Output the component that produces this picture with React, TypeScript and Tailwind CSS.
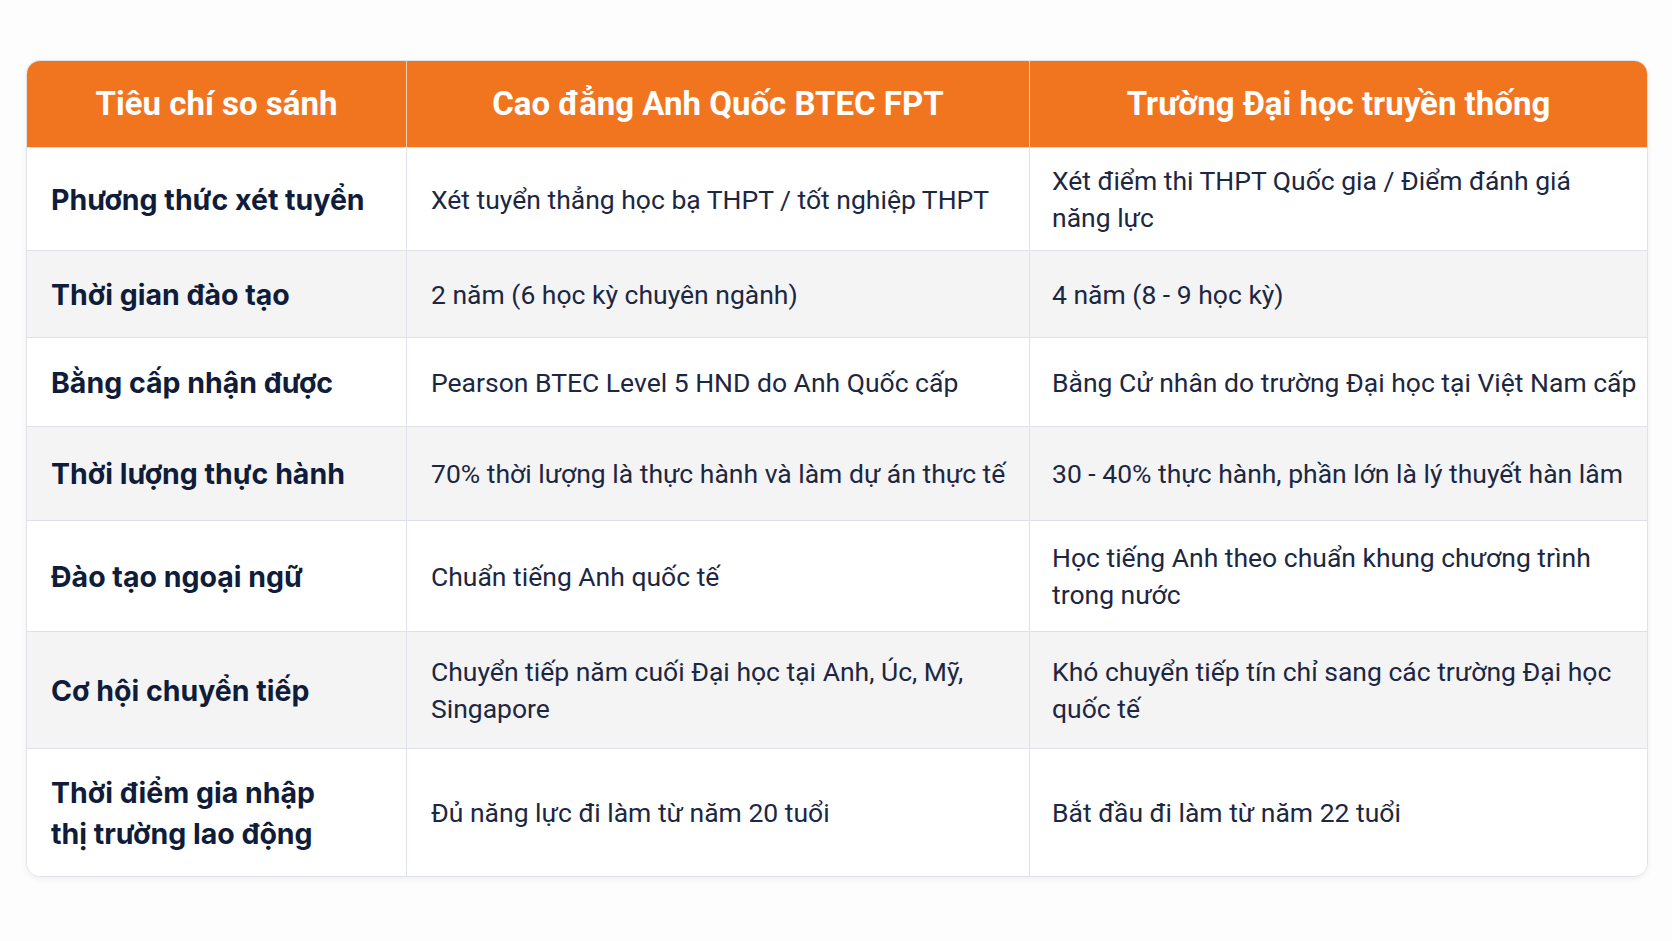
import React from "react";

type Row = {
  label: React.ReactNode;
  a: React.ReactNode;
  b: React.ReactNode;
  h: string;
  bg: string;
};

const rows: Row[] = [
  {
    label: "Phương thức xét tuyển",
    a: "Xét tuyển thẳng học bạ THPT / tốt nghiệp THPT",
    b: (
      <>
        Xét điểm thi THPT Quốc gia / Điểm đánh giá
        <br />
        năng lực
      </>
    ),
    h: "h-[103px]",
    bg: "bg-white",
  },
  {
    label: "Thời gian đào tạo",
    a: "2 năm (6 học kỳ chuyên ngành)",
    b: "4 năm (8 - 9 học kỳ)",
    h: "h-[87px]",
    bg: "bg-[#f4f4f5]",
  },
  {
    label: "Bằng cấp nhận được",
    a: "Pearson BTEC Level 5 HND do Anh Quốc cấp",
    b: "Bằng Cử nhân do trường Đại học tại Việt Nam cấp",
    h: "h-[89px]",
    bg: "bg-white",
  },
  {
    label: "Thời lượng thực hành",
    a: "70% thời lượng là thực hành và làm dự án thực tế",
    b: "30 - 40% thực hành, phần lớn là lý thuyết hàn lâm",
    h: "h-[94px]",
    bg: "bg-[#f4f4f5]",
  },
  {
    label: "Đào tạo ngoại ngữ",
    a: "Chuẩn tiếng Anh quốc tế",
    b: (
      <>
        Học tiếng Anh theo chuẩn khung chương trình
        <br />
        trong nước
      </>
    ),
    h: "h-[111px]",
    bg: "bg-white",
  },
  {
    label: "Cơ hội chuyển tiếp",
    a: (
      <>
        Chuyển tiếp năm cuối Đại học tại Anh, Úc, Mỹ,
        <br />
        Singapore
      </>
    ),
    b: (
      <>
        Khó chuyển tiếp tín chỉ sang các trường Đại học
        <br />
        quốc tế
      </>
    ),
    h: "h-[117px]",
    bg: "bg-[#f4f4f5]",
  },
  {
    label: (
      <>
        Thời điểm gia nhập
        <br />
        thị trường lao động
      </>
    ),
    a: "Đủ năng lực đi làm từ năm 20 tuổi",
    b: "Bắt đầu đi làm từ năm 22 tuổi",
    h: "h-[128px]",
    bg: "bg-white",
  },
];

export default function App() {
  return (
    <div
      className="w-[1672px] h-[941px] bg-[#fdfdfd] pt-[60px] pl-[26px]"
      style={{ fontFamily: "Roboto, 'Noto Sans', sans-serif" }}
    >
      <div className="w-[1622px] rounded-[14px] border border-[#dfe2e8] overflow-hidden shadow-[0_2px_6px_rgba(15,23,42,0.06)] bg-white">
        <div className="grid grid-cols-[380px_623px_1fr] h-[86px] bg-[#f1751f] text-white font-bold text-[33px]">
          <div className="flex items-center justify-center border-r border-[#f8d2b4]">
            Tiêu chí so sánh
          </div>
          <div className="flex items-center justify-center border-r border-[#f8d2b4]">
            Cao đẳng Anh Quốc BTEC FPT
          </div>
          <div className="flex items-center justify-center">
            Trường Đại học truyền thống
          </div>
        </div>
        {rows.map((r, i) => (
          <div
            key={i}
            className={`grid grid-cols-[380px_623px_1fr] border-t border-[#dfe2e8] ${r.h} ${r.bg}`}
          >
            <div
              className="flex items-center pl-6 pr-3 border-r border-[#dfe2e8] text-[28.5px] leading-[41px] font-bold text-[#0f1c3a] whitespace-nowrap"
              style={{ fontFamily: "Inter, Roboto, sans-serif" }}
            >
              <div>{r.label}</div>
            </div>
            <div className="flex items-center pl-6 pr-3 border-r border-[#dfe2e8] text-[26.5px] leading-[37px] text-[#1c2742] whitespace-nowrap">
              <div>{r.a}</div>
            </div>
            <div className="flex items-center pl-[22px] pr-2 text-[26.5px] leading-[37px] text-[#1c2742] whitespace-nowrap">
              <div>{r.b}</div>
            </div>
          </div>
        ))}
      </div>
    </div>
  );
}
